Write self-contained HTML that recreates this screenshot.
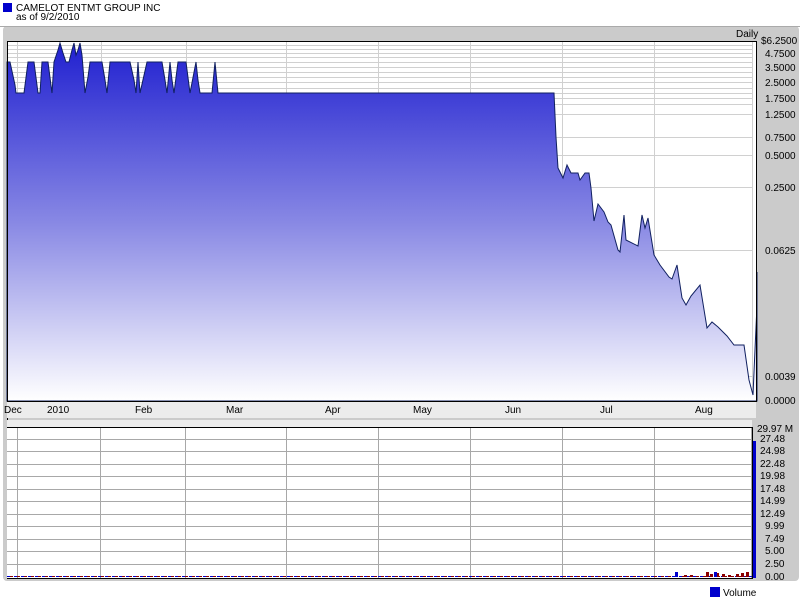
<!DOCTYPE html>
<html><head><style>
body{margin:0;background:#fff;width:800px;height:600px;overflow:hidden;font-family:"Liberation Sans",sans-serif}
svg text{font-family:"Liberation Sans",sans-serif;font-size:10px;fill:#000}
</style></head><body>
<svg width="800" height="600" xmlns="http://www.w3.org/2000/svg">
<defs><linearGradient id="g" x1="0" y1="0" x2="0" y2="1">
<stop offset="0" stop-color="#2020d0"/><stop offset="0.5" stop-color="#8888e4"/><stop offset="1" stop-color="#ffffff"/></linearGradient></defs>
<rect x="3" y="3" width="9" height="9" fill="#0000cc"/>
<text x="16" y="11">CAMELOT ENTMT GROUP INC</text>
<text x="16" y="20">as of 9/2/2010</text>
<rect x="3" y="26" width="796" height="555" rx="4" fill="#cbcbcb"/>
<line x1="0" y1="26.5" x2="800" y2="26.5" stroke="#aaa"/>
<text x="736" y="37">Daily</text>
<rect x="7" y="41" width="749" height="360" fill="#fff"/>
<g stroke="#d0d0d0" stroke-width="1">
<line x1="7" y1="45.5" x2="752" y2="45.5"/><line x1="7" y1="49.5" x2="752" y2="49.5"/><line x1="7" y1="53.5" x2="752" y2="53.5"/><line x1="7" y1="57.5" x2="752" y2="57.5"/><line x1="7" y1="62.5" x2="752" y2="62.5"/><line x1="7" y1="67.5" x2="752" y2="67.5"/><line x1="7" y1="72.5" x2="752" y2="72.5"/><line x1="7" y1="77.5" x2="752" y2="77.5"/><line x1="7" y1="82.5" x2="752" y2="82.5"/><line x1="7" y1="88.5" x2="752" y2="88.5"/><line x1="7" y1="93.5" x2="752" y2="93.5"/><line x1="7" y1="98.5" x2="752" y2="98.5"/><line x1="7" y1="104.5" x2="752" y2="104.5"/><line x1="7" y1="114.5" x2="752" y2="114.5"/><line x1="7" y1="137.5" x2="752" y2="137.5"/><line x1="7" y1="155.5" x2="752" y2="155.5"/><line x1="7" y1="187.5" x2="752" y2="187.5"/><line x1="7" y1="250.5" x2="752" y2="250.5"/><line x1="7" y1="376.5" x2="752" y2="376.5"/>
<line x1="17.5" y1="41" x2="17.5" y2="401"/><line x1="101.5" y1="41" x2="101.5" y2="401"/><line x1="186.5" y1="41" x2="186.5" y2="401"/><line x1="286.5" y1="41" x2="286.5" y2="401"/><line x1="378.5" y1="41" x2="378.5" y2="401"/><line x1="470.5" y1="41" x2="470.5" y2="401"/><line x1="562.5" y1="41" x2="562.5" y2="401"/><line x1="654.5" y1="41" x2="654.5" y2="401"/><line x1="752.5" y1="41" x2="752.5" y2="401"/>
</g>
<polygon fill="url(#g)" stroke="#102060" stroke-width="1" points="7,62 10,62 15,85 16,93 24,93 28,62 34,62 38,93 40,93 42,62 48,62 52,93 54,62 58,50 60,43 63,53 66,62 69,62 72,50 74,43 76,55 78,50 80,43 82,55 85,93 88,77 90,62 102,62 105,80 107,93 110,62 130,62 134,80 136,93 138,62 140,93 147,62 162,62 165,80 167,93 170,62 172,80 174,93 178,62 186,62 190,93 196,62 198,80 200,93 212,93 215,62 218,93 554,93 556,137 558,168 563,178 567,165 571,173 578,173 580,180 585,173 589,173 591,188 594,221 598,204 604,212 608,222 611,225 618,250 620,252 624,215 626,240 638,246 642,215 645,228 648,218 654,255 660,265 669,277 672,279 677,265 682,298 686,305 691,296 700,285 707,328 712,322 718,327 727,336 734,345 744,345 749,380 753,395 754,372 757,305 757,272 757,401 7,401"/>
<line x1="756.5" y1="41" x2="756.5" y2="401" stroke="#000"/>
<line x1="7" y1="41.5" x2="757" y2="41.5" stroke="#000"/>
<line x1="7.5" y1="41" x2="7.5" y2="578" stroke="#000"/>
<rect x="7" y="401" width="749" height="17" fill="#ececec"/>
<line x1="7" y1="401.5" x2="757" y2="401.5" stroke="#000"/>
<rect x="7" y="420" width="745" height="7" fill="#ececec"/>
<g font-size="10">
<text x="4" y="413">Dec</text><text x="47" y="413">2010</text><text x="135" y="413">Feb</text><text x="226" y="413">Mar</text><text x="325" y="413">Apr</text><text x="413" y="413">May</text><text x="505" y="413">Jun</text><text x="600" y="413">Jul</text><text x="695" y="413">Aug</text>
</g>
<g>
<text x="761" y="44">$6.2500</text><text x="765" y="57">4.7500</text><text x="765" y="71">3.5000</text><text x="765" y="86">2.5000</text><text x="765" y="102">1.7500</text><text x="765" y="118">1.2500</text><text x="765" y="141">0.7500</text><text x="765" y="159">0.5000</text><text x="765" y="191">0.2500</text><text x="765" y="254">0.0625</text><text x="765" y="380">0.0039</text><text x="765" y="404">0.0000</text>
</g>
<rect x="7" y="427" width="745" height="151" fill="#fff"/>
<g stroke="#a8a8a8">
<line x1="7" y1="439.5" x2="752" y2="439.5"/><line x1="7" y1="451.5" x2="752" y2="451.5"/><line x1="7" y1="464.5" x2="752" y2="464.5"/><line x1="7" y1="476.5" x2="752" y2="476.5"/><line x1="7" y1="489.5" x2="752" y2="489.5"/><line x1="7" y1="501.5" x2="752" y2="501.5"/><line x1="7" y1="514.5" x2="752" y2="514.5"/><line x1="7" y1="526.5" x2="752" y2="526.5"/><line x1="7" y1="539.5" x2="752" y2="539.5"/><line x1="7" y1="551.5" x2="752" y2="551.5"/><line x1="7" y1="564.5" x2="752" y2="564.5"/>
<line x1="17.5" y1="427" x2="17.5" y2="578"/><line x1="100.5" y1="427" x2="100.5" y2="578"/><line x1="185.5" y1="427" x2="185.5" y2="578"/><line x1="286.5" y1="427" x2="286.5" y2="578"/><line x1="378.5" y1="427" x2="378.5" y2="578"/><line x1="470.5" y1="427" x2="470.5" y2="578"/><line x1="562.5" y1="427" x2="562.5" y2="578"/><line x1="654.5" y1="427" x2="654.5" y2="578"/><line x1="751.5" y1="427" x2="751.5" y2="578"/>
</g>
<line x1="7" y1="427.5" x2="752" y2="427.5" stroke="#000"/>
<line x1="7" y1="576.5" x2="752" y2="576.5" stroke="#0000cc" stroke-dasharray="4,3"/>
<line x1="10" y1="576.5" x2="752" y2="576.5" stroke="#8b0000" stroke-dasharray="3,4"/>
<g fill="#8b0000">
<rect x="706" y="572" width="3" height="5"/><rect x="710" y="574" width="3" height="3"/><rect x="716" y="573" width="3" height="4"/><rect x="722" y="574" width="3" height="3"/><rect x="728" y="575" width="3" height="2"/><rect x="736" y="574" width="3" height="3"/><rect x="741" y="573" width="3" height="4"/><rect x="746" y="572" width="3" height="5"/><rect x="684" y="575" width="3" height="2"/><rect x="690" y="575" width="3" height="2"/>
</g>
<g fill="#0000cc">
<rect x="675" y="572" width="3" height="5"/><rect x="714" y="572" width="3" height="5"/><rect x="753" y="441" width="3" height="137"/>
</g>
<line x1="752.5" y1="427" x2="752.5" y2="578" stroke="#000"/>
<line x1="7" y1="578.5" x2="753" y2="578.5" stroke="#000"/>
<g>
<text x="757" y="432">29.97 M</text><text x="760" y="442">27.48</text><text x="760" y="454">24.98</text><text x="760" y="467">22.48</text><text x="760" y="479">19.98</text><text x="760" y="492">17.48</text><text x="760" y="504">14.99</text><text x="760" y="517">12.49</text><text x="765" y="529">9.99</text><text x="765" y="542">7.49</text><text x="765" y="554">5.00</text><text x="765" y="567">2.50</text><text x="765" y="580">0.00</text>
</g>
<rect x="710" y="587" width="10" height="10" fill="#0000cc"/>
<text x="723" y="596">Volume</text>
</svg>
</body></html>
